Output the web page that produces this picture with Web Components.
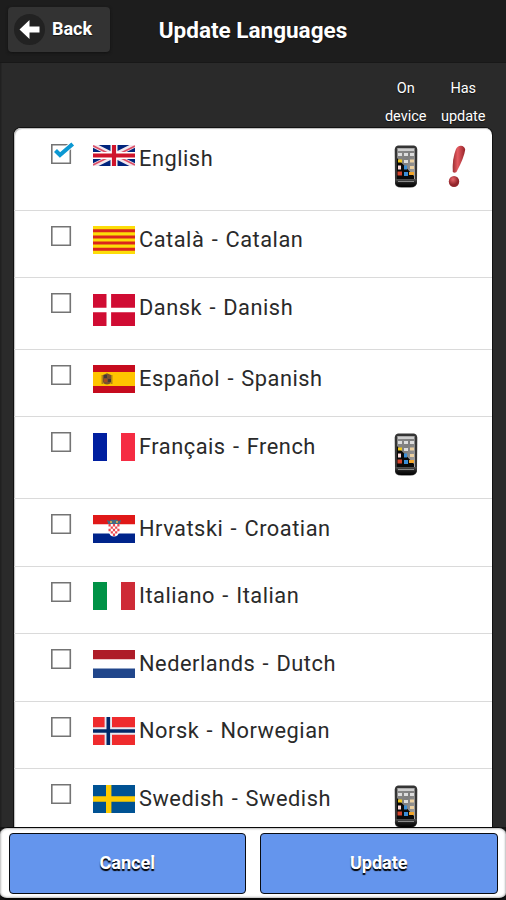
<!DOCTYPE html>
<html lang="en"><head><meta charset="utf-8"><title>Update Languages</title>
<style>body{margin:0;background:#2a2a2a;font-family:Roboto,"Liberation Sans",sans-serif;overflow:hidden}</style></head>
<body><language-page></language-page>
<script>
const flags={
uk:[21,'<path fill="#00247d" d="M0 0h42v21H0z"/><path stroke="#f3e8ee" stroke-width="5" d="M0 0l42 21M42 0L0 21"/><path stroke="#dc5068" stroke-width="1.7" d="M0 .8l18 9M24 11l18 9M42 1l-18 9M18 11L0 20"/><path stroke="#fff" stroke-width="7" d="M21 0v21M0 10.5h42"/><path stroke="#cf142b" stroke-width="4.2" d="M21 0v21M0 10.5h42"/>'],
ca:[28,'<path fill="#fcdd09" d="M0 0h42v28H0z"/><path stroke="#da251d" stroke-width="3" d="M0 4.7h42M0 10.9h42M0 17.1h42M0 23.3h42"/>'],
dk:[32,'<path fill="#d00c33" d="M0 0h42v32H0z"/><path stroke="#fff" stroke-width="4.6" d="M15.8 0v32M0 16h42"/>'],
es:[28,'<path fill="#c60b1e" d="M0 0h42v28H0z"/><path fill="#ffc400" d="M0 7h42v14H0z"/><path fill="#b18612" d="M8.5 10h2v9h-2zm9 0h2v9h-2z"/><path fill="#7a5130" d="M10 10l4-1.8L18 10v7q-1 2.5-4 2.5T10 17z"/><path fill="#433938" d="M11 10h3v3h-3zm4 4h3v3h-3z"/><path fill="#a34b22" d="M11 14h3v3h-3z"/>'],
fr:[28,'<path fill="#001fa0" d="M0 0h14v28H0z"/><path fill="#fff" d="M14 0h14v28H14z"/><path fill="#f52c43" d="M28 0h14v28H28z"/>'],
hr:[28,'<path fill="#fff" d="M0 0h42v28H0z"/><path fill="#e01818" d="M0 0h42v9.3H0z"/><path fill="#00248b" d="M0 18.6h42V28H0z"/><path fill="#fff" d="M15.5 9h11v7q-1 5.5-5.5 5.5T15.5 16z"/><path fill="#ed4850" d="M15.5 9h2.2v2.4h-2.2zm4.4 0h2.2v2.4h-2.2zm4.4 0h2.2v2.4h-2.2zm-6.6 2.4h2.2v2.4h-2.2zm4.4 0h2.2v2.4h-2.2zm-6.6 2.4h2.2v2.4h-2.2zm4.4 0h2.2v2.4h-2.2zm4.4 0h2.2v2.4h-2.2zm-6.6 2.4h2.2v2.4h-2.2zm4.4 0h2.2v2.4h-2.2zm-2.2 2.4h2.2V21h-2.2z"/><path fill="#446a85" d="M14 5l2.5 1 2-1.5L21 5l2.5-.5 2 1.5L28 5l-1.2 4H15.2z"/><path fill="#c6a452" d="M17 6h2v2h-2zm6 0h2v2h-2z"/>'],
it:[28,'<path fill="#009246" d="M0 0h14v28H0z"/><path fill="#fff" d="M14 0h14v28H14z"/><path fill="#ce2b37" d="M28 0h14v28H28z"/>'],
nl:[28,'<path fill="#fff" d="M0 0h42v28H0z"/><path fill="#ae1c28" d="M0 0h42v9.3H0z"/><path fill="#21468b" d="M0 18.6h42V28H0z"/>'],
no:[28,'<path fill="#ef2b2d" d="M0 0h42v28H0z"/><path stroke="#e9e9f0" stroke-width="7.4" d="M15.3 0v28M0 14h42"/><path stroke="#002868" stroke-width="3.6" d="M15.3 0v28M0 14h42"/>'],
se:[28,'<path fill="#005293" d="M0 0h42v28H0z"/><path stroke="#fecb00" stroke-width="5.4" d="M15.7 0v28M0 14h42"/>']};
const define=(name,render)=>customElements.define(name,class extends HTMLElement{
 connectedCallback(){if(!this.shadowRoot)this.attachShadow({mode:'open'}).innerHTML=render(this)}});

define('country-flag',el=>{const[h,art]=flags[el.getAttribute('code')];
 return `<style>:host{display:block;width:42px;height:${h}px}svg{display:block}</style><svg width="42" height="${h}" viewBox="0 0 42 ${h}">${art}</svg>`});

define('check-box',el=>`<style>:host{display:block;width:25px;height:24px;margin-top:-3.500px}svg{display:block;overflow:visible}</style>
<svg width="25" height="24" fill="none"><path stroke="#747474" stroke-width="1.6" d="M.8 3.8h18.500v18.500H.8z"/>${el.hasAttribute('checked')?'<path stroke="#fff" stroke-width="6" d="M4.500 9l4.500 4.500L22 2.800"/><path stroke="#0c98d2" stroke-width="4.200" d="M4.500 9.500l4.500 4.500L21.700 3"/>':''}</svg>`);

define('phone-icon',()=>`<style>:host{display:block;width:24px;height:43px}svg{display:block}g{filter:blur(.45px)}</style>
<svg width="24" height="43"><defs><linearGradient id="s" x2="1" y2="1"><stop stop-color="#8c8c8c"/><stop offset=".45" stop-color="#7e7e7e"/><stop offset="1" stop-color="#a5a5a5"/></linearGradient><linearGradient id="b" x2="0" y2="1"><stop stop-color="#555"/><stop offset=".5" stop-color="#181818"/><stop offset="1" stop-color="#000"/></linearGradient></defs>
<path fill="#353535" d="M4 .5h16q3 .5 3.300 4L23 36q.5 3-1.500 5-2 1.500-5 1.500h-9Q4 42.500 2 41 .5 39 1 36L.7 4.500Q1 1 4 .5z"/>
<path fill="url(#s)" d="M3 3h18v31H3z"/><path fill="#090909" d="M3 13l17 18v3H3z"/>
<path fill="#cecece" d="M4 3.500h16V6H4z"/>
<g><path fill="#ddd" d="M4 8h4v3H4zm6 0h4v3h-4zm6 0h4v3h-4zm-6 7h4v3h-4z"/><path fill="#f2c91d" d="M4 14.500h4v3H4z"/><path fill="#ecd0a0" d="M16 14.500h4v3h-4zM16 21h4v3h-4z"/><path fill="#ffdede" d="M4 20.500h3v4H4z"/><path fill="#3b8fd8" d="M10 20.500h3v4h-3zm0 6.500h4v4h-4z"/><path fill="#d4442c" d="M3.500 26.500H8v4H3.500z"/><path fill="#f2a52b" d="M15 27h5v3h-5z"/></g>
<path fill="url(#b)" d="M1.500 34h21v4q-1 4-6 4h-9q-5 0-6-4z"/><path stroke="#888" d="M4 36.500h16"/></svg>`);

define('update-mark',()=>`<style>:host{display:block;width:18px;height:43px}svg{display:block}</style>
<svg width="18" height="43"><defs><linearGradient id="r"><stop stop-color="#9c3034"/><stop offset=".4" stop-color="#e45a60"/><stop offset="1" stop-color="#952329"/></linearGradient><radialGradient id="d" cx=".4" cy=".3"><stop stop-color="#e7656a"/><stop offset="1" stop-color="#92252b"/></radialGradient></defs>
<path fill="url(#r)" d="M4.800 27Q4 14 8 4 10 .5 13 .7q3.500.3 4.200 4Q16 13 8.500 27q-2 1.500-3.700 0z"/><ellipse cx="6" cy="36.500" rx="5.200" ry="5.500" fill="url(#d)"/></svg>`);

define('language-row',el=>`<style>:host{display:block;box-sizing:border-box;border-bottom:1.500px solid #dadada;height:${el.getAttribute('height')}px}
.row{display:grid;grid-template-columns:42px 46px 255px 51px 1fr;padding:15.500px 0 0 37px;align-items:start}:host([checked]) .row{padding-top:16.500px}
country-flag{margin-top:0}.name{font-size:21.800px;line-height:26px;letter-spacing:.52px;word-spacing:1.400px;color:#2a2a2a;margin-top:1px;white-space:nowrap}
phone-icon,update-mark{margin-top:.500px}phone-icon{margin-left:-.500px}.update{padding-left:3px}</style>
<div class="row"><check-box ${el.hasAttribute('checked')?'checked':''}></check-box><country-flag code="${el.getAttribute('code')}"></country-flag><div class="name"><slot></slot></div><div>${el.hasAttribute('device')?'<phone-icon></phone-icon>':''}</div><div class="update">${el.hasAttribute('update')?'<update-mark></update-mark>':''}</div></div>`);

define('page-header',()=>`<style>:host{display:grid;grid-template-columns:102px 286px 1fr;box-sizing:border-box;height:63px;padding:7px 8px;background:#1d1d1d;color:#fff;font-weight:700;border-bottom:1px solid #181818}
.back{display:flex;align-items:center;gap:7px;box-sizing:border-box;height:45px;padding-left:6px;border-radius:4px;background:#333;box-shadow:0 1px 3px #111;font-size:18px}
.circle{width:31px;height:31px;border-radius:50%;background:#222}.circle svg{display:block}.label{line-height:20px;padding-bottom:2px}
h1{font-size:22.500px;line-height:46px;margin:0;text-align:center;white-space:nowrap}.label,h1{text-shadow:0 1px 1px #111}</style>
<div class="back"><span class="circle"><svg width="31" height="31"><path fill="#fff" d="M5.500 15.500L15.500 6v6.500h10v6h-10V25z"/></svg></span><span class="label">Back</span></div><h1>Update Languages</h1>`);

define('column-labels',()=>`<style>:host{display:flex;justify-content:flex-end;box-sizing:border-box;height:65px;padding:12px 14px 0 0;color:#fff;font-size:14.500px;line-height:28px;text-align:center;text-shadow:0 1px 1px #111}span{width:57.500px}</style><span>On<br>device</span><span>Has<br>update</span>`);

define('action-button',()=>`<style>:host{display:grid;place-items:center;box-sizing:border-box;border:1.500px solid #090b10;border-radius:4px;padding-bottom:2px;background:#6495ed;color:#fff;font-weight:700;font-size:18px;text-shadow:0 1.500px 1px #000}</style><slot></slot>`);

define('action-bar',()=>`<style>:host{display:grid;grid-template-columns:1fr 1fr;gap:14px;box-sizing:border-box;height:73px;padding:5px 8.500px 4px;border:1px solid #080808;border-width:1px 0 2px;background:#fff;border-radius:7px;box-shadow:inset 0 0 2px 1px #bbb}</style><action-button>Cancel</action-button><action-button>Update</action-button>`);

define('language-page',()=>`<style>:host{display:grid;grid-template-rows:63px 65px 699px 73px;width:506px;height:900px;background:#2a2a2a;box-shadow:inset 1.500px 0 #202020}
main{overflow:hidden;margin:0 14.500px 0 14px;background:#fff;border-radius:7px 7px 0 0;box-shadow:0 0 0 1px #111,inset 1px 1px 1px #bbb}
footer{background:#151515}</style><page-header></page-header><column-labels></column-labels><main>
<language-row code="uk" height="82.500" checked device update>English</language-row>
<language-row code="ca" height="67.500">Català - Catalan</language-row>
<language-row code="dk" height="71.500">Dansk - Danish</language-row>
<language-row code="es" height="67.500">Español - Spanish</language-row>
<language-row code="fr" height="82" device>Français - French</language-row>
<language-row code="hr" height="67.500">Hrvatski - Croatian</language-row>
<language-row code="it" height="67.500">Italiano - Italian</language-row>
<language-row code="nl" height="67.500">Nederlands - Dutch</language-row>
<language-row code="no" height="67.500">Norsk - Norwegian</language-row>
<language-row code="se" height="82" device>Swedish - Swedish</language-row>
</main><footer><action-bar></action-bar></footer>`);
</script></body></html>
